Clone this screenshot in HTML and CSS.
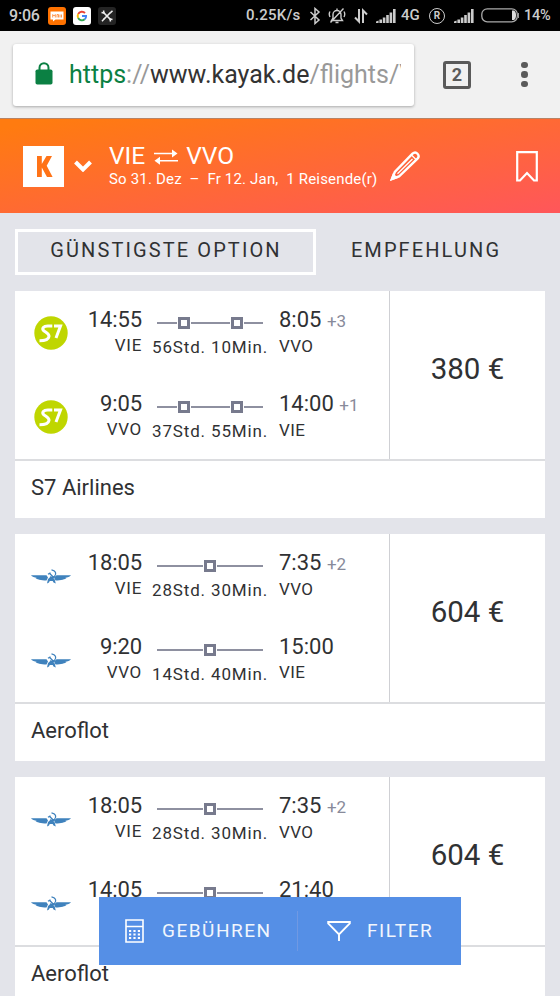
FILE: index.html
```html
<!DOCTYPE html>
<html lang="de">
<head>
<meta charset="utf-8">
<title>VIE – VVO</title>
<link rel="stylesheet" href="styles.css">
</head>
<body>
<svg class="symbols" aria-hidden="true">
  <symbol id="signal" viewBox="0 0 20 14"><path d="M0 14v-1.500l2.600-1v2.500zM3.400 14v-3.500h2.600v3.500zM6.800 14v-5.500h2.600v5.500zM10.200 14v-8h2.600v8zM13.600 14V3.500h2.600V14zM17 14V0h2.600v14z"/></symbol>
  <symbol id="s7" viewBox="0 0 34 34"><circle cx="17" cy="17" r="16.700" fill="#bfd600"/><path d="M18.300 10h-4.500c-4.500 0-6 2.500-4.300 4.500 1.500 1.700 6 3 5.500 6-.5 3-3.500 4.300-9.500 4.300M20 10h6.500L22 22" fill="none" stroke="#fff" stroke-width="3"/></symbol>
  <symbol id="aeroflot" viewBox="0 0 40 16"><path d="M0 6.200h15.500l1.500 2.300-1.500 3C10 11.500 5.500 10.200 4.500 9.300L6 9C3.500 8.500 1 7.500 0 6.200zM40 6.200H25.500L23 8.500l1.500 3c5.500 0 10-1.300 11-2.200L34 9c2.500-.5 5-1.500 6-2.800z" fill="#3f82bd"/><path d="M20.500 .8c4 .6 5.500 4 3 6.600-1.300 1.300-3.200 1.300-4.500.3M17 5.200l2.500-1.500M18.700 4.500l4.500 4.500" fill="none" stroke="#3f82bd" stroke-width="1.300"/><path d="M16 14.500l1-4.500 3-2.500 3.500 2.500 1.300 4.500-2.300-1-.8-1.500h-3l-.7 1.500z" fill="#3f82bd"/></symbol>
</svg>

<div class="status">
  <span class="clock">9:06</span>
  <svg class="app" viewBox="0 0 18 18"><rect width="18" height="18" rx="3" fill="#ff7200"/><path d="M2.500 4.500h13v8h-8l-2.500 2v-2H2.500z" fill="#fff"/><path d="M4.700 10.500v-3l1.300 1.500 1.300-1.500v3M9 10.500v-3h1.500v3M12 7.500v3M13.500 7.500v3" stroke="#ff9850" fill="none"/></svg>
  <svg class="app" viewBox="0 0 18 18"><rect width="18" height="18" rx="3" fill="#fff"/><g fill="none" stroke-width="1.900"><path d="M12 6A4.200 4.200 0 0 0 5.200 7" stroke="#ea4335"/><path d="M5.200 7a4.200 4.200 0 0 0 0 4" stroke="#fbbc05"/><path d="M5.200 11a4.200 4.200 0 0 0 6.500 1.300" stroke="#34a853"/><path d="M11.700 12.300A4 4 0 0 0 13.100 9H9" stroke="#4285f4"/></g></svg>
  <svg class="app" viewBox="0 0 18 18"><rect width="18" height="18" rx="3" fill="#242424"/><path d="M5.500 5.500l7 7M12.500 5.500l-7 7" stroke="#eee" stroke-width="1.700"/><path d="M5.500 3.500l.5 2.500-2.500-.5M14.500 3.700l-2.200 2.200M14.500 12.500l-2.500-.5.500 2.500M6 12l-2 2.200" fill="none" stroke="#eee" stroke-width="1.500"/></svg>
  <span class="speed">0.25K/s</span>
  <svg class="bt" viewBox="0 0 12 18"><path d="M1.500 5l8.500 8-4 3.500v-15L10 5l-8.500 8" fill="none" stroke="#ccc" stroke-width="1.500"/></svg>
  <svg class="bell" viewBox="0 0 18 18"><path d="M3.500 13.500h11L13 11V7.500a4 4 0 0 0-8 0V11zM7.500 15.500h3M9 3.500V1.500M15.500 1.500l-13 14M2 4.500Q.5 7 2 10M16 4.500Q17.500 7 16 10" fill="none" stroke="#ccc" stroke-width="1.400"/></svg>
  <svg class="data" viewBox="0 0 14 16"><path d="M5 1v12.500L1 9.500M9 15V2.500L13 6.500" fill="none" stroke="#ccc" stroke-width="2"/></svg>
  <svg class="sig first"><use href="#signal"/></svg>
  <span class="net">4G</span>
  <span class="roam">R</span>
  <svg class="sig second"><use href="#signal"/></svg>
  <svg class="battery" viewBox="0 0 38 15"><rect x=".8" y=".8" width="35.500" height="13" rx="5.500" fill="none" stroke="#aaa" stroke-width="1.300"/><path d="M31 2.500h2q2 1 2 4.800t-2 4.700h-2z" fill="#ddd"/><path d="M37.400 5v5" stroke="#aaa"/></svg>
  <span class="pct">14%</span>
</div>

<div class="toolbar">
  <div class="url">
    <svg class="lock" viewBox="0 0 18 23"><path d="M4.500 9V5.700a4.500 4.500 0 0 1 9 0V9" fill="none" stroke="#0b8043" stroke-width="2"/><rect x=".5" y="7.500" width="17" height="15" rx="1.800" fill="#0b8043"/></svg>
    <div class="address"><span class="secure">https</span><span class="dim">://</span>www.kayak.de<span class="dim">/flights/V</span></div>
  </div>
  <div class="tabcount">2</div>
  <div class="more"><i></i><i></i><i></i></div>
</div>

<header class="header">
  <div class="logo"><svg viewBox="0 0 16 21"><path d="M0 0h4.800v8L9.500 0H15L9.700 9.700 15.600 21H10L4.800 11.500V21H0z" fill="#ff7317"/></svg></div>
  <svg class="chev" viewBox="0 0 18 12"><path d="M1.500 2L9 9.500 16.500 2" fill="none" stroke="#fff" stroke-width="4"/></svg>
  <div class="trip">
    <div class="route"><span>VIE</span><svg viewBox="0 0 24 16"><path d="M0 4.500h20M4 11.800h20" stroke="#fff" stroke-width="1.600"/><path d="M18 .5l5.500 4-5.500 4zM6 7.800l-5.500 4 5.500 4z" fill="#fff"/></svg><span>VVO</span></div>
    <div class="dates">So 31. Dez&nbsp; –&nbsp; Fr 12. Jan,&nbsp; 1 Reisende(r)</div>
  </div>
  <svg class="pencil" viewBox="0 0 32 32"><path d="M3 29l2.800-7L23.500 3.700q2.700-2.500 5 0t0 5L10 26.500z" fill="none" stroke="#fff" stroke-width="2.400"/><path d="M1 31l3-8 5 5z" fill="#fff"/><path d="M22.500 5l4.500 4.500M8.500 23.800L23.500 9" stroke="#fff" stroke-width="1.300"/></svg>
  <svg class="bookmark" viewBox="0 0 22 31"><path d="M1.200 1.200h19.600v28.300h-2.800L11 22 4 29.500H1.200z" fill="none" stroke="#fff" stroke-width="2.200"/></svg>
</header>

<nav class="tabs">
  <div class="tab active">GÜNSTIGSTE OPTION</div>
  <div class="tab">EMPFEHLUNG</div>
</nav>

<main class="results">
  <section class="card">
    <div class="offer">
      <div class="legs">
        <div class="leg"><svg class="s7"><use href="#s7"/></svg><div class="from"><b>14:55</b><span>VIE</span></div><div class="flight"><div class="line two"><i></i><i></i></div><span>56Std. 10Min.</span></div><div class="to"><b>8:05 <small>+3</small></b><span>VVO</span></div></div>
        <div class="leg"><svg class="s7"><use href="#s7"/></svg><div class="from"><b>9:05</b><span>VVO</span></div><div class="flight"><div class="line two"><i></i><i></i></div><span>37Std. 55Min.</span></div><div class="to"><b>14:00 <small>+1</small></b><span>VIE</span></div></div>
      </div>
      <div class="price">380 €</div>
    </div>
    <div class="airline">S7 Airlines</div>
  </section>
  <section class="card">
    <div class="offer">
      <div class="legs">
        <div class="leg"><svg class="su"><use href="#aeroflot"/></svg><div class="from"><b>18:05</b><span>VIE</span></div><div class="flight"><div class="line"><i></i></div><span>28Std. 30Min.</span></div><div class="to"><b>7:35 <small>+2</small></b><span>VVO</span></div></div>
        <div class="leg"><svg class="su"><use href="#aeroflot"/></svg><div class="from"><b>9:20</b><span>VVO</span></div><div class="flight"><div class="line"><i></i></div><span>14Std. 40Min.</span></div><div class="to"><b>15:00</b><span>VIE</span></div></div>
      </div>
      <div class="price">604 €</div>
    </div>
    <div class="airline">Aeroflot</div>
  </section>
  <section class="card">
    <div class="offer">
      <div class="legs">
        <div class="leg"><svg class="su"><use href="#aeroflot"/></svg><div class="from"><b>18:05</b><span>VIE</span></div><div class="flight"><div class="line"><i></i></div><span>28Std. 30Min.</span></div><div class="to"><b>7:35 <small>+2</small></b><span>VVO</span></div></div>
        <div class="leg"><svg class="su"><use href="#aeroflot"/></svg><div class="from"><b>14:05</b></div><div class="flight"><div class="line"><i></i></div></div><div class="to"><b>21:40</b></div></div>
      </div>
      <div class="price">604 €</div>
    </div>
    <div class="airline">Aeroflot</div>
  </section>
</main>

<div class="actions">
  <div class="action fees"><svg viewBox="0 0 19 24"><path d="M1 1h17v22H1zM1 7.500h17" fill="none" stroke="#fff" stroke-width="1.600"/><path d="M4 12h11M4 15.500h11M4 19h11" stroke="#fff" stroke-width="2" stroke-dasharray="2.200"/></svg><span>GEBÜHREN</span></div>
  <div class="action filter"><svg viewBox="0 0 24 20"><path d="M1.200 1h21.600v1.300L12 13.500 1.200 2.300zM12 13v7" fill="none" stroke="#fff" stroke-width="1.900"/></svg><span>FILTER</span></div>
</div>
</body>
</html>
```

FILE: styles.css
```css
* { box-sizing: border-box; }
html, body { height: 996px; overflow: hidden; }
body { margin: 0; background: #e3e4ea; color: #303133; font-family: Roboto, "Liberation Sans", sans-serif; }
svg { display: block; flex: none; }
.symbols { position: absolute; width: 0; height: 0; }

.status { display: flex; align-items: center; height: 31px; padding-left: 9px; background: #000; color: #ccc; font-size: 16px; font-weight: 500; line-height: 31px; white-space: nowrap; }
.clock { width: 39px; letter-spacing: -.2px; }
.app { width: 18px; height: 18px; margin-right: 7px; }
.speed { width: 55px; margin-left: 123px; font-size: 15px; letter-spacing: .25px; }
.bt { width: 12px; height: 18px; margin-left: 8px; }
.bell { width: 18px; height: 18px; margin-left: 7px; }
.data { width: 14px; height: 16px; margin-left: 8px; }
.sig { width: 20px; height: 14px; fill: #ccc; }
.first { margin-left: 8px; }
.net { width: 20px; margin-left: 5px; font-size: 15px; }
.roam { width: 16px; height: 16px; margin-left: 8px; border: 1.500px solid #ccc; border-radius: 50%; font-size: 10px; font-weight: 700; line-height: 13px; text-align: center; }
.second { margin-left: 9px; }
.battery { width: 38px; height: 15px; margin-left: 7px; }
.pct { margin-left: 5px; font-size: 14.500px; letter-spacing: -.2px; }

.toolbar { display: flex; align-items: center; height: 88px; background: #f1f1f1; padding-left: 13px; border-bottom: 1px solid #b78365; }
.url { display: flex; align-items: center; width: 401px; height: 62px; padding-left: 22px; border-radius: 3px; background: #fff; box-shadow: 0 1px 3px rgba(0, 0, 0, .3); }
.lock { width: 18px; height: 23px; margin-top: -2px; }
.address { width: 332px; margin-left: 16px; overflow: hidden; font-size: 25px; line-height: 36px; white-space: nowrap; color: #333; }
.secure { color: #0b8043; }
.dim { color: #999; }
.tabcount { width: 28px; height: 28px; margin-left: 29px; border: 3px solid #5a5a5a; border-radius: 3px; color: #5a5a5a; font-size: 18px; font-weight: 700; line-height: 22px; text-align: center; }
.more { display: grid; gap: 3px; margin-left: 50px; }
.more i { width: 6.500px; height: 6.500px; border-radius: 50%; background: #5a5a5a; }

.header { display: flex; align-items: flex-start; height: 94px; padding-left: 23px; background: linear-gradient(170deg, #ff7b10 5%, #ff5759 98%); color: #fff; }
.logo { display: grid; place-items: center; width: 41px; height: 41px; margin-top: 27px; background: #fff; }
.logo svg { width: 16px; height: 21px; margin-left: 2px; }
.chev { width: 18px; height: 12px; margin: 41px 0 0 10px; }
.trip { width: 268px; margin: 23px 0 0 17px; white-space: nowrap; }
.route { display: flex; align-items: center; height: 28px; font-size: 24.500px; font-weight: 400; line-height: 28px; }
.route svg { width: 24px; height: 16px; margin: 2px 8px 0 9px; }
.dates { font-size: 15px; letter-spacing: .18px; line-height: 18px; }
.pencil { width: 32px; height: 32px; margin: 31px 0 0 12px; }
.bookmark { width: 22px; height: 31px; margin: 32px 0 0 95px; }

.tabs { display: flex; margin: 16px 15px; }
.tab { width: 219px; height: 46px; padding-left: 1px; font-size: 20px; letter-spacing: 2.100px; line-height: 42px; text-align: center; white-space: nowrap; }
.active { width: 301px; border: 3px solid #fff; line-height: 36px; }

.results { display: grid; gap: 16px; padding: 0 15px; }
.card { height: 227px; background: #fff; }
.offer { display: flex; height: 170px; border-bottom: 2px solid #dcdde0; }
.legs { width: 375px; border-right: 1px solid #cfd0d4; }
.leg { display: grid; grid-template-columns: 42px 69px 137px 1fr; height: 84px; padding: 16px 0 0 16px; }
.s7 { width: 34px; height: 34px; margin: 9px 0 0 3px; }
.su { width: 40px; height: 16px; margin-top: 19px; }
.from { text-align: right; }
.from b, .to b { display: block; font-size: 22px; font-weight: 400; line-height: 26px; white-space: nowrap; }
.from span, .to span { display: block; font-size: 17px; line-height: 25px; letter-spacing: .4px; }
.from b { letter-spacing: -.1px; }
.from span { letter-spacing: .7px; }
.to small { font-size: 17px; color: #888a9a; }
.flight { padding-left: 10px; }
.line { display: flex; align-items: center; justify-content: center; width: 106px; height: 12px; margin: 9.500px 0 0 5px; background: linear-gradient(#8e90a0, #8e90a0) center / 100% 2px no-repeat; }
.two { justify-content: space-between; padding: 0 20px 0 21px; }
.line i { width: 12px; height: 12px; border: 3px solid #777a8d; background: #fff; outline: 1px solid #fff; }
.flight span { display: block; margin-top: 6.500px; font-size: 17px; line-height: 24px; letter-spacing: .85px; white-space: nowrap; }
.price { flex: 1; font-size: 29.500px; line-height: 157px; text-align: center; }
.airline { padding-left: 16px; font-size: 22px; line-height: 54px; }

.actions { position: absolute; left: 99px; top: 897px; display: flex; width: 362px; height: 68px; background: #558fe6; color: #fff; font-size: 19px; line-height: 68px; letter-spacing: 1.500px; }
.action { display: flex; align-items: center; }
.action span { opacity: .92; }
.fees { width: 199px; padding-left: 26px; background: linear-gradient(#7099e3, #7099e3) right center / 1px 40px no-repeat; }
.fees svg { width: 19px; height: 24px; margin-right: 18px; }
.filter { padding-left: 29px; }
.filter svg { width: 24px; height: 20px; margin-right: 16px; }
```
